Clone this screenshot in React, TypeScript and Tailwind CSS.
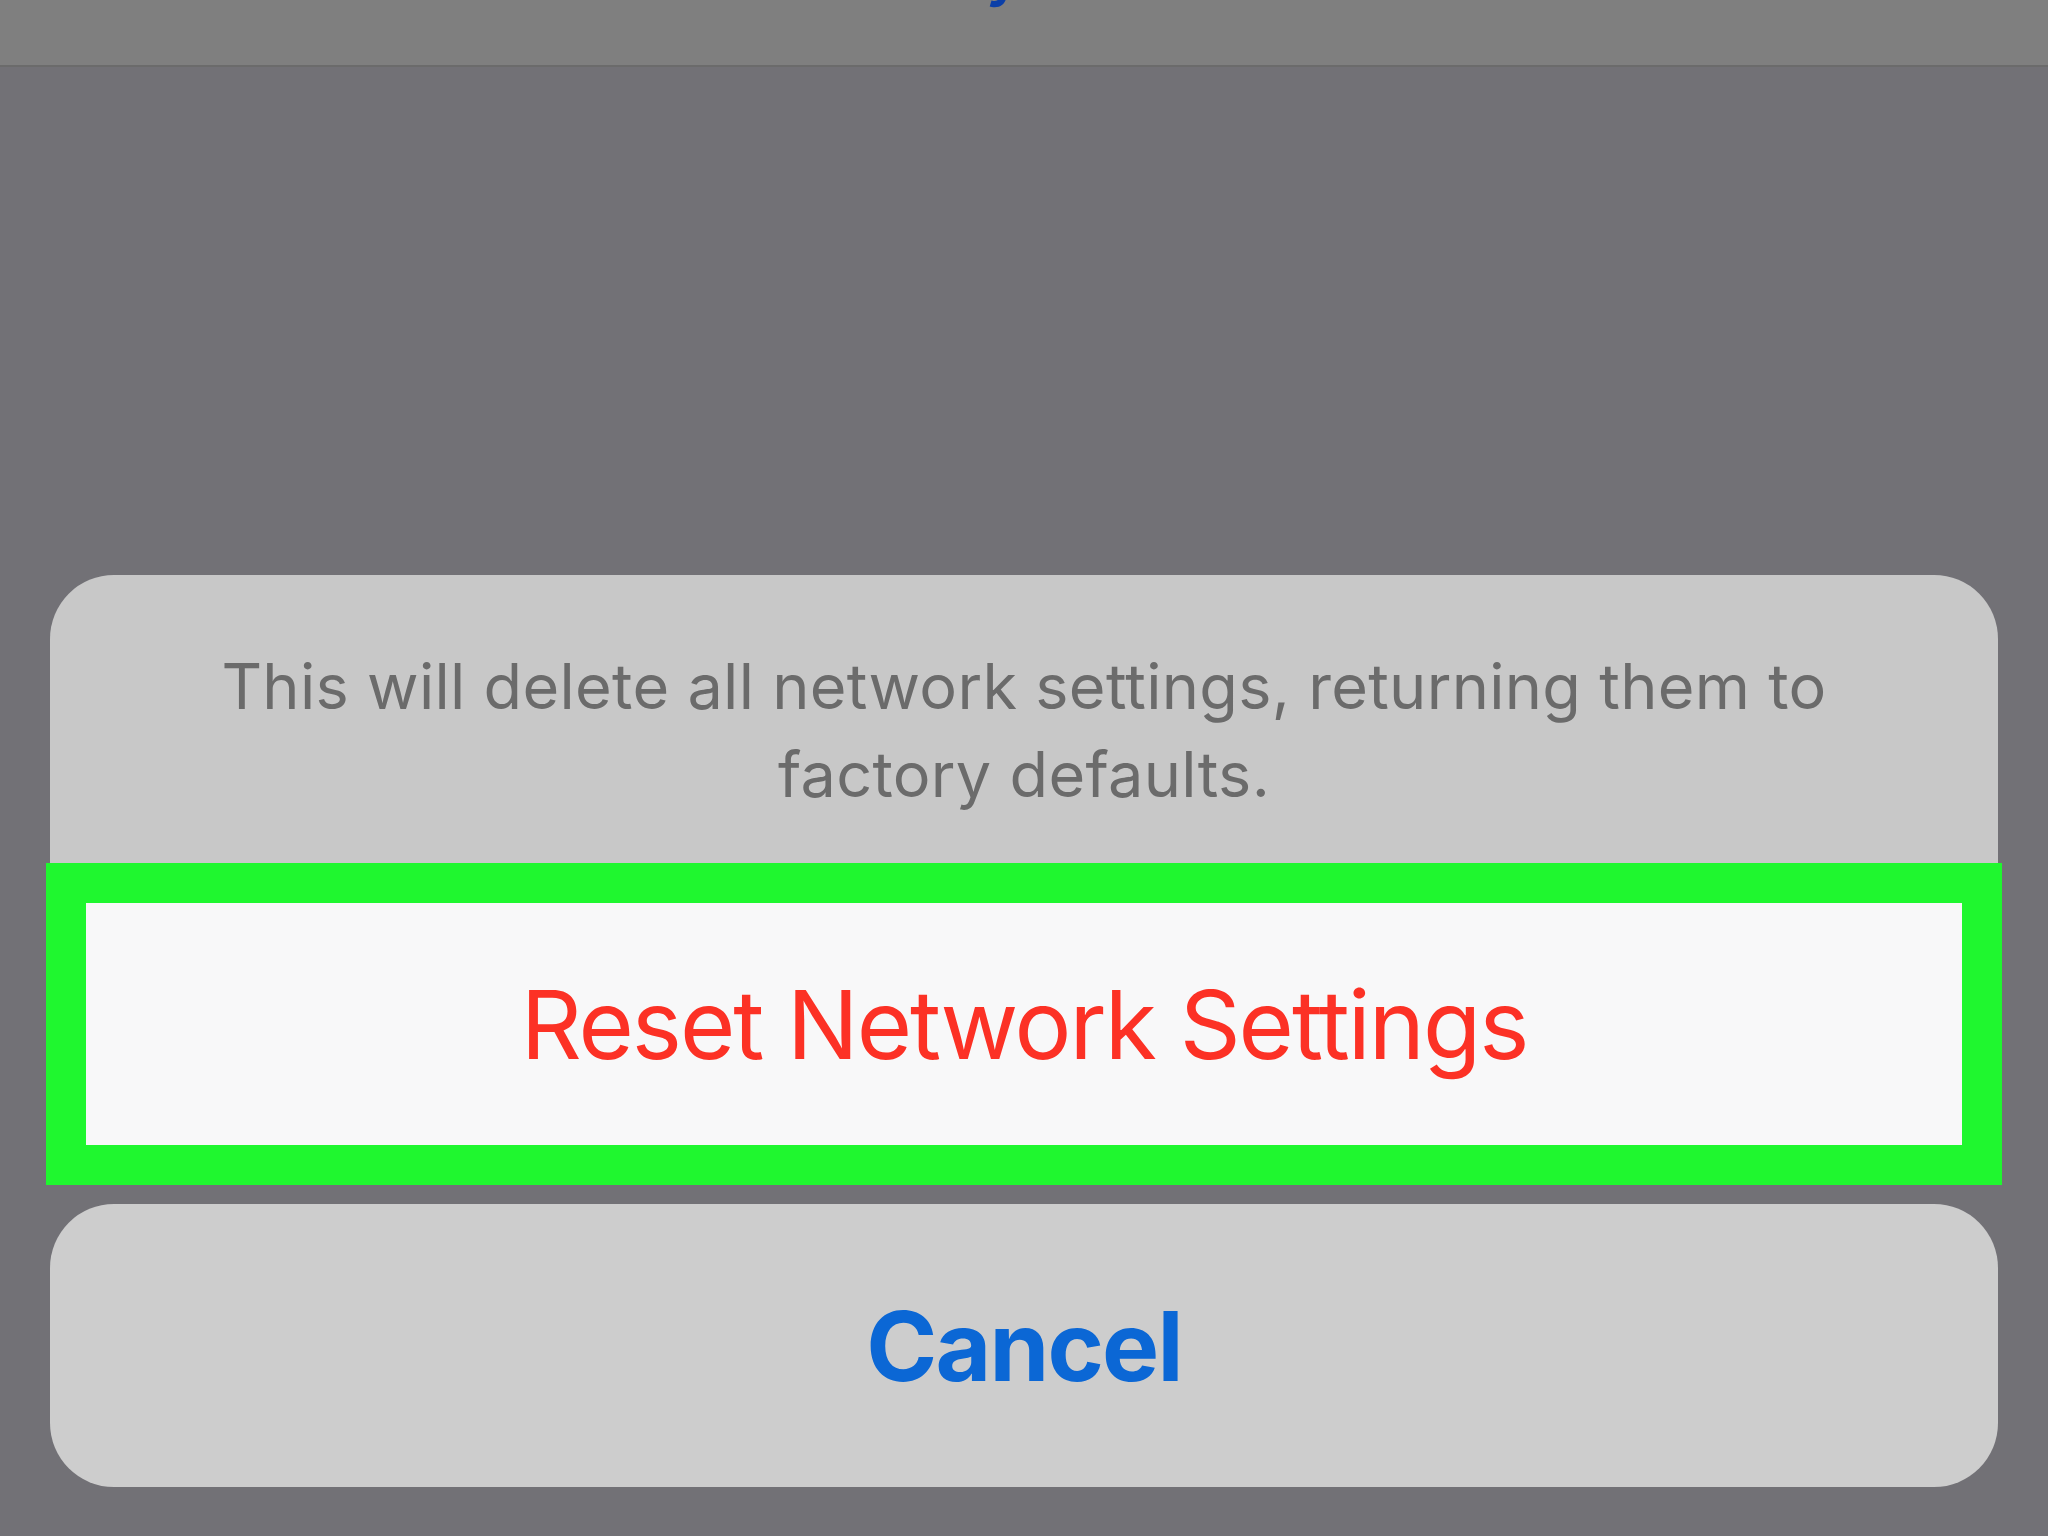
import React from "react";

export default function App() {
  return (
    <div
      className="w-[2048px] h-[1536px] bg-[#727176] flex flex-col overflow-hidden"
      style={{ fontFamily: "Inter, 'Noto Sans', sans-serif" }}
    >
      {/* top navigation bar (mostly cut off) */}
      <div className="relative h-[67px] bg-[#7f7f7f] border-b-2 border-[#6b6b6b] overflow-hidden">
        <span className="absolute left-[986px] top-[-57px] text-[60px] leading-[60px] font-semibold text-[#0b3fa8]">
          y
        </span>
      </div>

      {/* action sheet */}
      <div className="relative mt-[508px] mx-[50px]">
        <div className="rounded-[64px] overflow-hidden bg-[#c8c8c8] flex flex-col">
          <div className="h-[288px] pt-[67px] text-center text-[63px] leading-[88px] text-[#6b6b6b] tracking-[0.3px]">
            <div>This will delete all network settings, returning them to</div>
            <div>factory defaults.</div>
          </div>
          <div className="h-[322px] bg-[#f8f8f9] flex items-center justify-center">
            <span className="text-[95px] leading-none text-[#fc3125] tracking-[-2px]">
              Reset Network Settings
            </span>
          </div>
        </div>
        {/* green highlight annotation */}
        <div className="absolute left-[-4px] right-[-4px] bottom-0 h-[322px] border-[40px] border-[#1ff72f]" />
      </div>

      <div className="mt-[19px] mx-[50px] h-[283px] rounded-[64px] bg-[#cdcdcd] flex items-center justify-center">
        <span className="text-[96px] leading-none font-bold text-[#0b67d5] tracking-[-1.8px]">
          Cancel
        </span>
      </div>
    </div>
  );
}
